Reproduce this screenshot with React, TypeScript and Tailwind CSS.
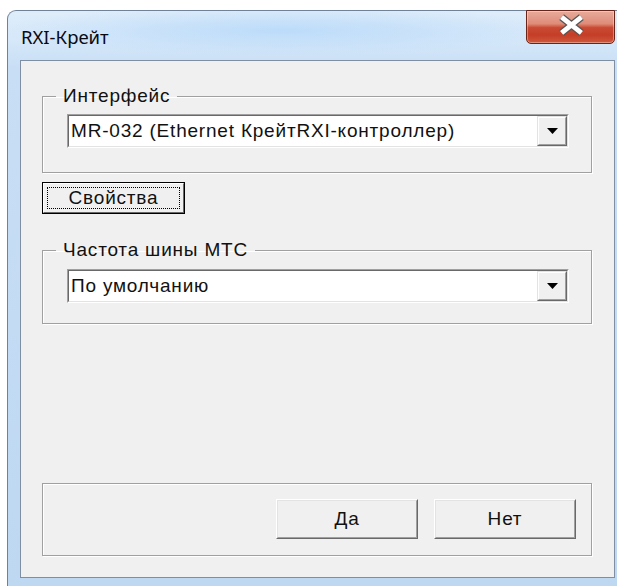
import React from "react";

const ui = "font-['Liberation_Sans',Arial,sans-serif] text-[19px] tracking-[0.8px] text-[#111]";

function ComboBox({ value }: { value: string }) {
  return (
    <div className="h-[34px] border border-t-[#a0a0a0] border-l-[#a0a0a0] border-r-white border-b-white">
      <div className="h-full flex border border-t-[#696969] border-l-[#696969] border-r-[#e3e3e3] border-b-[#e3e3e3] bg-white">
        <div className={`flex-1 flex items-center pl-[2px] leading-[20px] whitespace-nowrap overflow-hidden ${ui}`}>
          {value}
        </div>
        <div className="w-[30px] h-full border border-t-[#e3e3e3] border-l-[#e3e3e3] border-r-[#696969] border-b-[#696969]">
          <div className="h-full flex items-center justify-center bg-[#f0f0f0] border border-t-white border-l-white border-r-[#a0a0a0] border-b-[#a0a0a0]">
            <svg width="11" height="6" viewBox="0 0 11 6">
              <path d="M0 0H11L5.5 6Z" fill="#000" />
            </svg>
          </div>
        </div>
      </div>
    </div>
  );
}

function Button({ label, className = "" }: { label: string; className?: string }) {
  return (
    <button
      type="button"
      className={`border border-t-white border-l-white border-r-[#696969] border-b-[#696969] bg-[#f0f0f0] ${className}`}
    >
      <div className={`h-full flex items-center justify-center border border-t-[#e3e3e3] border-l-[#e3e3e3] border-r-[#a0a0a0] border-b-[#a0a0a0] leading-[20px] ${ui}`}>
        {label}
      </div>
    </button>
  );
}

function CloseButton() {
  return (
    <div className="ml-auto mr-[2px] -mt-px w-[89px] h-[34px] rounded-b-[5px] border border-[#6a2418] bg-[linear-gradient(180deg,#e8ab9b_0%,#de8c78_40%,#c94a33_52%,#c43e28_75%,#d0583c_100%)] shadow-[inset_0_0_0_1px_rgba(255,255,255,0.35)] flex items-start justify-center">
      <svg width="89" height="34" viewBox="0 0 89 34" className="-ml-px">
        <path d="M36 6L56 22M56 6L36 22" stroke="#555555" strokeWidth="7.5" fill="none" />
        <path d="M36 6L56 22M56 6L36 22" stroke="#ffffff" strokeWidth="5" fill="none" />
      </svg>
    </div>
  );
}

export default function App() {
  return (
    <div className="w-[617px] h-[586px] bg-white pl-[7px] pt-[10px] overflow-hidden">
      <div className="w-[610px] h-[576px] rounded-tl-[9px] border-l border-t border-[#6f8297] bg-[linear-gradient(180deg,#dfedfa_0%,#d6e8f9_5%,#c8def5_10%,#bed8f2_100%)] flex flex-col">
        {/* title bar */}
        <div className="h-[49px] flex items-start bg-[radial-gradient(ellipse_at_45%_40%,rgba(185,218,250,0.9),rgba(220,235,249,0)_60%)]">
          <span className="ml-[13px] mt-[14px] font-['Noto_Sans',sans-serif] text-[18.5px] leading-[24px] text-[#0a0a14]">
            RXI-Крейт
          </span>
          <CloseButton />
        </div>

        {/* client area */}
        <div className="ml-[12px] w-[595px] h-[518px] border border-[#7f8fa3] bg-[#f0f0f0] flex flex-col pl-[21px] pr-[22px]">
          <fieldset className="mt-[24px] border border-[#a0a0a0] shadow-[inset_1px_1px_0_#ffffff,1px_1px_0_#ffffff]">
            <legend className={`ml-[13px] px-[7px] leading-[22px] ${ui}`}>Интерфейс</legend>
            <div className="mt-[7px] ml-[24px] mr-[22px] mb-[24px]">
              <ComboBox value="MR-032 (Ethernet КрейтRXI-контроллер)" />
            </div>
          </fieldset>

          <div className="mt-[9px] w-[143px] h-[32px] border border-black">
            <button
              type="button"
              className="w-full h-full border border-t-white border-l-white border-r-[#696969] border-b-[#696969] bg-[#f0f0f0] p-[3px]"
            >
              <div className={`h-full flex items-center justify-center border border-dotted border-black leading-[20px] ${ui}`}>
                Свойства
              </div>
            </button>
          </div>

          <fieldset className="mt-[25px] border border-[#a0a0a0] shadow-[inset_1px_1px_0_#ffffff,1px_1px_0_#ffffff]">
            <legend className={`ml-[13px] px-[7px] leading-[22px] ${ui}`}>Частота шины МТС</legend>
            <div className="mt-[8px] ml-[24px] mr-[22px] mb-[20px]">
              <ComboBox value="По умолчанию" />
            </div>
          </fieldset>

          <div className="mt-auto mb-[21px] border border-[#a0a0a0] shadow-[inset_1px_1px_0_#ffffff,1px_1px_0_#ffffff] pt-[15px] pb-[16px] pr-[15px] flex justify-end gap-[16px]">
            <Button label="Да" className="w-[142px] h-[40px]" />
            <Button label="Нет" className="w-[142px] h-[40px]" />
          </div>
        </div>
      </div>
    </div>
  );
}
